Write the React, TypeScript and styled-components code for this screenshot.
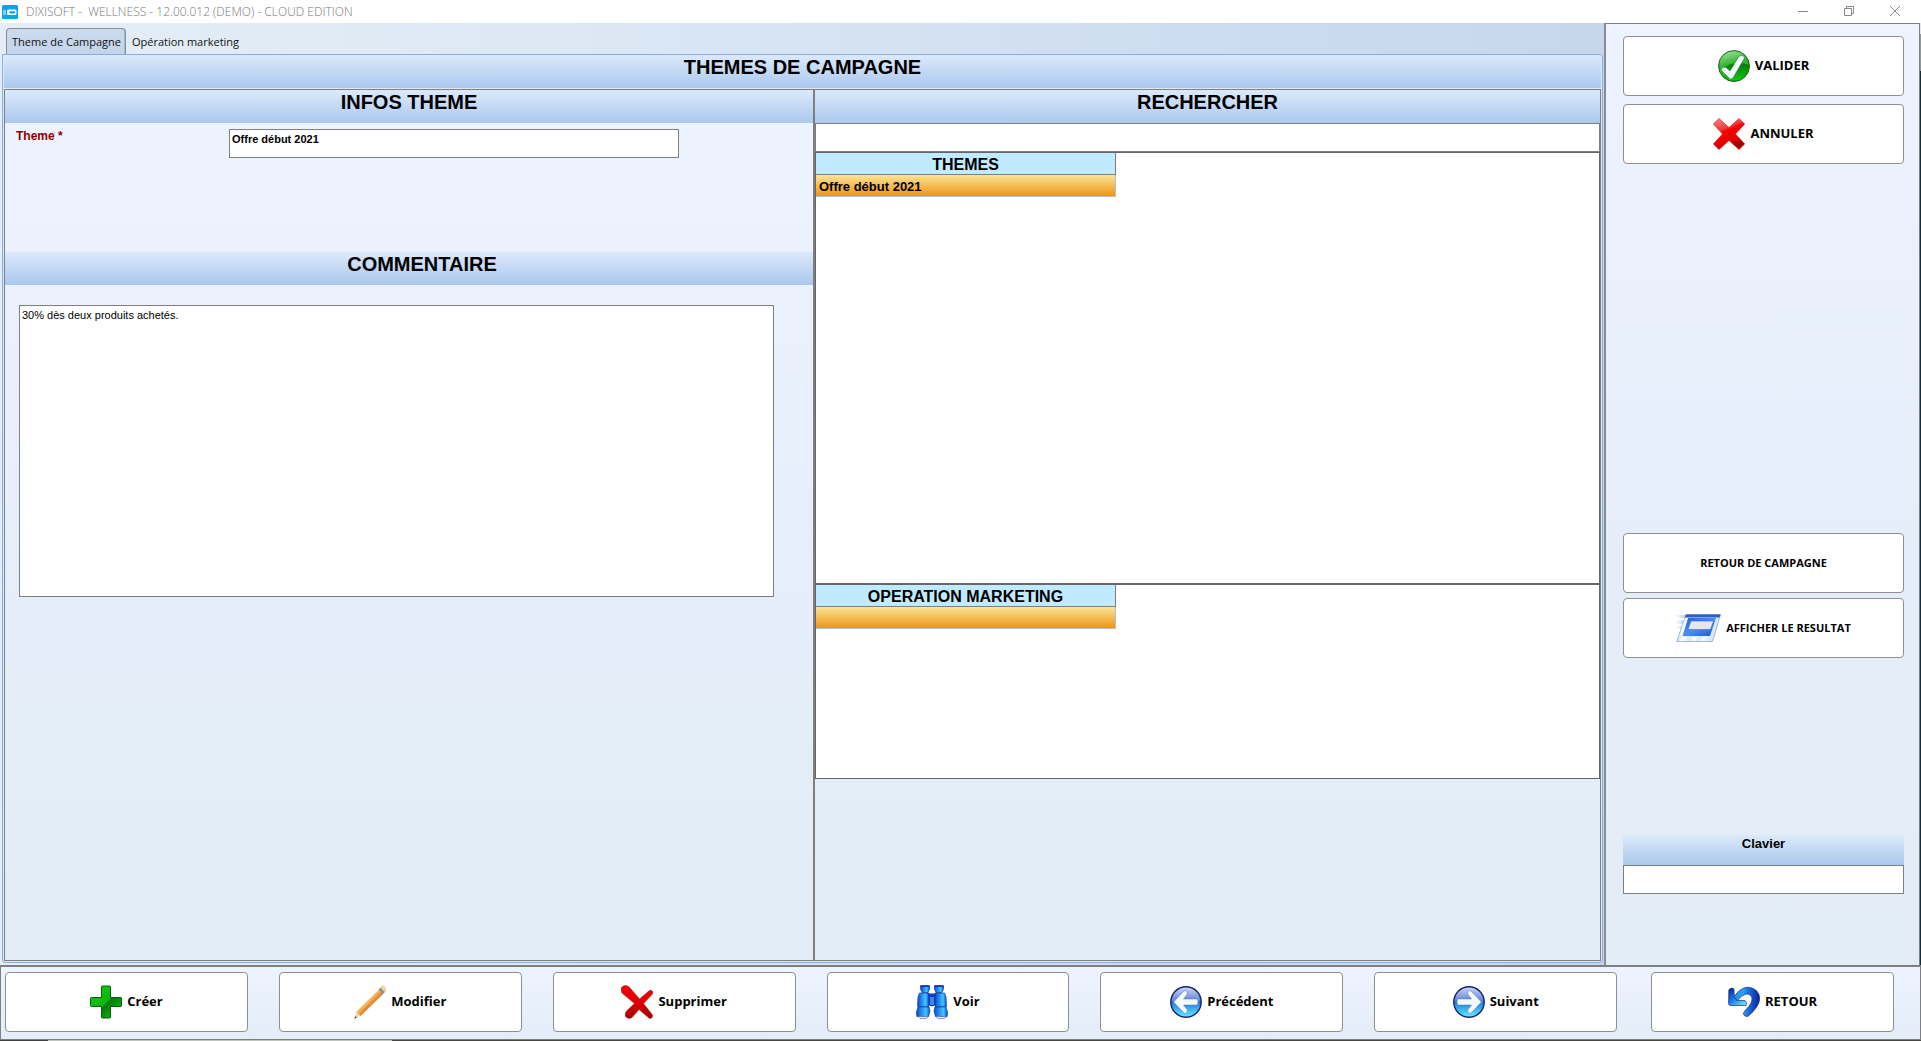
import React from "react";
import styled, { createGlobalStyle } from "styled-components";

const ARIAL = `"Liberation Sans", Arial, sans-serif`;
const SEGOE = `"Open Sans", "Segoe UI", sans-serif`;
const GREY = "#7f7f7f";

const GlobalStyle = createGlobalStyle`
  * { box-sizing: border-box; }
  body { margin: 0; background: #fff; color: #000; font-family: ${SEGOE}; }
  h1, h2, p { margin: 0; }
`;

const Page = styled.div`
  display: flex;
  flex-direction: column;
  min-height: 100vh;
`;

const TitleBar = styled.header`
  display: flex;
  align-items: center;
  height: 23px;
  padding: 0 3px 0 2px;
  background: #fff;
`;

const WindowTitle = styled.span`
  flex: 1;
  padding-left: 8px;
  font-size: 12px;
  font-weight: 300;
  line-height: 22px;
  white-space: pre;
  color: #777;
`;

const WindowButton = styled.button`
  display: grid;
  place-items: center;
  width: 46px;
  height: 22px;
  padding: 0 0 2px;
  border: 0;
  background: none;
  color: #888;
`;

const Workspace = styled.div`
  flex: 1;
  display: grid;
  grid-template-columns: minmax(0, 1fr) 316px;
  padding-right: 1px;
  background: linear-gradient(#e8e8e8 11px, #8d9a98 11px 48px, #0b3038 48px);
`;

const Main = styled.main`
  display: flex;
  flex-direction: column;
  padding: 5px 1px 2px 2px;
  background: linear-gradient(90deg, #e5eef8 0%, #dce8f4 35%, #cddcf0 75%, #c6d7ec 100%);
`;

const Tabs = styled.nav`
  display: flex;
  align-items: flex-end;
  padding-left: 4px;
`;

const Tab = styled.button<{ $active?: boolean }>`
  height: 26px;
  padding: 1px 4px 0 5px;
  border: 1px solid ${(p) => (p.$active ? "#8a8f96" : "transparent")};
  border-bottom: 0;
  border-radius: 4px 4px 0 0;
  background: ${(p) => (p.$active ? "linear-gradient(#ccdaec, #c3d5ec)" : "none")};
  box-shadow: ${(p) => (p.$active ? "inset -1px 0 #8fc3d6" : "none")};
  font: 11px/24px ${SEGOE};
  color: #111;
`;

const Pane = styled.section`
  flex: 1;
  display: flex;
  flex-direction: column;
  padding: 0 1px 1px;
  border: 1px solid #86aee2;
  border-radius: 0 3px 3px 3px;
  background: #dce9fb;
`;

const BarTitle = styled.h2<{ $indent?: number }>`
  height: 33px;
  padding-left: ${(p) => p.$indent ?? 0}px;
  background: linear-gradient(#dce9fc, #abc8ed);
  font: bold 20px/24px ${ARIAL};
  text-align: center;
`;

const Columns = styled.div`
  flex: 1;
  display: grid;
  grid-template-columns: minmax(0, 810fr) minmax(0, 787fr);
  margin-top: 1px;
`;

const Panel = styled.div`
  display: flex;
  flex-direction: column;
  border: 1px solid ${GREY};
  background: linear-gradient(#edf4ff, #e6edfa 65%, #e3eef7 72%, #e2ecf7);
`;

const ThemeForm = styled.div`
  display: grid;
  grid-template-columns: 213px minmax(0, 450px);
  align-items: start;
  height: 129px;
  padding: 6px 11px;
`;

const FieldLabel = styled.label`
  font: bold 12px/14px ${ARIAL};
  color: #8b0000;
`;

const TextInput = styled.input`
  width: 100%;
  height: 29px;
  padding: 0 2px 9px;
  border: 1px solid ${GREY};
  background: #fff;
  font: bold 11px/18px ${ARIAL};
  color: #000;
`;

const CommentWrap = styled.div`
  padding: 20px 39px 0 14px;
`;

const Comment = styled.textarea`
  display: block;
  width: 100%;
  height: 292px;
  padding: 2px;
  border: 1px solid ${GREY};
  background: #fff;
  font: 11px/14px ${ARIAL};
  color: #000;
  resize: none;
`;

const ListBox = styled.div<{ $grow: number }>`
  flex: ${(p) => p.$grow} 1 0;
  border: 1px solid #666;
  background: #fff;
`;

const ListSpacer = styled.div`
  flex: 182 1 0;
`;

const List = styled.table`
  width: 300px;
  border-collapse: separate;
  border-spacing: 0;
  font-family: ${ARIAL};

  th, td {
    height: 22px;
    padding: 0;
    line-height: 19px;
    border-right: 1px solid ${GREY};
    border-bottom: 1px solid ${GREY};
  }
  th {
    background: #c0eaff;
    font-size: 16px;
    padding-top: 2px;
  }
  td {
    padding: 1px 0 0 3px;
    background: linear-gradient(#fce596, #ee9416);
    border-color: #c0c0c0;
    font-size: 13px;
    font-weight: bold;
  }
`;

const SidePanel = styled.aside`
  display: flex;
  flex-direction: column;
  padding: 12px 15px 71px 17px;
  border: 1px solid ${GREY};
  border-left: 2px solid #8a8c90;
  border-bottom: 0;
  background: linear-gradient(#edf4ff, #e6edfa 60%, #e4edf8 80%, #e2ecf7);
`;

const SideGroup = styled.div<{ $gap: number }>`
  display: flex;
  flex-direction: column;
  gap: ${(p) => p.$gap}px;
`;

const SideGap = styled.div<{ $grow: number }>`
  flex: ${(p) => p.$grow} 1 0;
`;

const ActionButton = styled.button<{ $small?: boolean }>`
  display: flex;
  flex: 1 1 0;
  align-items: center;
  justify-content: center;
  gap: 5px;
  min-height: 60px;
  padding: 0;
  border: 1px solid #8f8f8f;
  border-radius: 4px;
  background: #fff;
  font: bold ${(p) => (p.$small ? 11 : 13)}px/18px ${SEGOE};
  color: #000;
  white-space: nowrap;

  svg { flex: none; }
  span { padding-bottom: ${(p) => (p.$small ? 0 : 2)}px; }
`;

const KeyboardLabel = styled.label`
  height: 30px;
  background: linear-gradient(#dce9fb, #abc8ec);
  font: bold 13px/18px ${ARIAL};
  text-align: center;
`;

const Footer = styled.footer`
  display: flex;
  gap: 31px;
  padding: 5px 26px 7px 4px;
  border: 1px solid ${GREY};
  border-top-width: 2px;
  background: linear-gradient(#eef4ff, #e3ecf8);

  button:last-child { margin-left: 3px; }
`;

const DesktopEdge = styled.div`
  height: 1px;
  background: linear-gradient(90deg, #403f39 48px, #c3c4b8 48px 392px, #4a463c 392px);
`;

const AppIcon = () => (
  <svg width="16" height="14" viewBox="0 0 16 14" aria-hidden="true">
    <rect width="16" height="14" rx="1.500" fill="#08a4ee" />
    <rect x="1" y="5" width="3" height="5" fill="#7fd0f7" />
    <rect x="5" y="4.500" width="9.500" height="5.500" rx="1.500" fill="#fff" />
    <rect x="7.500" y="6.200" width="5.500" height="2.200" rx=".6" fill="#08a4ee" />
  </svg>
);

const CheckIcon = () => (
  <svg width="32" height="32" viewBox="0 0 32 32" aria-hidden="true">
    <defs>
      <linearGradient id="ok" x1="0" y1="0" x2=".3" y2="1">
        <stop offset="0" stopColor="#b2ecb2" />
        <stop offset=".5" stopColor="#35b235" />
        <stop offset="1" stopColor="#12c412" />
      </linearGradient>
      <linearGradient id="od" x1="0" y1="0" x2="0" y2="1">
        <stop offset="0" stopColor="#0a760a" />
        <stop offset="1" stopColor="#10cc10" />
      </linearGradient>
    </defs>
    <circle cx="16" cy="16" r="15.400" fill="url(#ok)" />
    <path d="M7 17Q13 13 20 13 27 13 31.400 15A15.400 15.400 0 0 1 7 28.500z" fill="url(#od)" />
    <circle cx="16" cy="16" r="15.400" fill="none" stroke="#14641a" strokeWidth="1" />
    <path d="M3.500 18.500Q5 16.500 8 17.500L12 21 20.500 7Q22.500 4.500 25.500 6 27 7 26 9L15 28Q12.500 30.500 10.500 27.500L3.500 20.500z" fill="#f3fbff" stroke="#1b7d24" strokeWidth=".6" />
  </svg>
);

const CancelIcon = () => (
  <svg width="32" height="32" viewBox="0 0 32 32" aria-hidden="true">
    <defs>
      <linearGradient id="no" x1="0" y1="0" x2=".4" y2="1">
        <stop offset="0" stopColor="#f58a8a" />
        <stop offset=".4" stopColor="#ee3a3a" />
        <stop offset=".48" stopColor="#f80000" />
        <stop offset=".75" stopColor="#ee0000" />
        <stop offset="1" stopColor="#9e0000" />
      </linearGradient>
    </defs>
    <path d="M6 .5 16 9.500 26 .5 31.700 6 22.500 16 31.700 26 26 31.600 16 22.500 6 31.600 .3 26 9.500 16 .3 6z" fill="url(#no)" stroke="#d01818" strokeWidth=".6" strokeLinejoin="round" />
  </svg>
);

const WindowIcon = () => (
  <svg width="45" height="28" viewBox="0 0 45 28" aria-hidden="true">
    <defs>
      <linearGradient id="wn" x1="0" y1="0" x2="1" y2="1">
        <stop offset="0" stopColor="#1c5ee0" />
        <stop offset=".5" stopColor="#4a90f2" />
        <stop offset="1" stopColor="#1a56d6" />
      </linearGradient>
      <linearGradient id="wf" x1="0" y1="0" x2="1" y2="0">
        <stop offset="0" stopColor="#9fc6fa" stopOpacity="0" />
        <stop offset="1" stopColor="#9cc0f5" />
      </linearGradient>
    </defs>
    <path d="M0 1h12l-1 3H0zM0 6h10l-1 4H0zM0 12h8l-1 3H0z" fill="url(#wf)" />
    <path d="M10 .5H44.500L36.500 27.500H.8z" fill="#dcebfc" stroke="#8fa8cc" strokeWidth=".8" />
    <path d="M10 .5H44.500L43.500 3.500H9z" fill="#2a5fc8" />
    <path d="M12 4 6 22H34L40 4z" fill="url(#wn)" />
    <path d="M9 4 3.500 22H6.500L12 4z" fill="#f6faff" />
    <path d="M15 7H37.500L34.500 15.500H12z" fill="#e6e7eb" stroke="#2a56b0" strokeWidth=".5" />
    <path d="M5 23h6l-1 4H4zM16 23h5l-1 4h-5zM26 23h5l-1 4h-5z" fill="#fff" opacity=".7" />
  </svg>
);

const PlusIcon = () => (
  <svg width="32" height="34" viewBox="0 0 32 34" aria-hidden="true">
    <defs>
      <linearGradient id="pl" x1="0" y1="0" x2="1" y2="1">
        <stop offset="0" stopColor="#0bd30b" />
        <stop offset=".5" stopColor="#10b510" />
        <stop offset=".54" stopColor="#087a08" />
        <stop offset="1" stopColor="#0cd00c" />
      </linearGradient>
    </defs>
    <path d="M12.500 1h7q1 0 1 1v10.500H31q.5 0 .5 1v7q0 1-.5 1H20.500V32q0 1-1 1h-7q-1 0-1-1V21.500H1.500q-1 0-1-1v-7q0-1 1-1h10V2q0-1 1-1z" fill="url(#pl)" stroke="#0a5c10" strokeWidth="1" />
  </svg>
);

const PencilIcon = () => (
  <svg width="32" height="34" viewBox="0 0 32 34" aria-hidden="true">
    <path d="M2.500 27 25 4.500 29.500 8.500 6.500 31z" fill="#f6ad50" />
    <path d="M5 28.500 27.500 6.500 29.500 8.500 6.500 31z" fill="#dc8d3d" />
    <path d="M2.500 27 26 4" stroke="#f9cb86" strokeWidth="1" />
    <path d="M2.500 27 6.500 31 .5 33.500z" fill="#f3d6a3" />
    <path d="M1.300 31.200 3 32.500 .3 33.700z" fill="#3b3b3b" />
    <path d="M24.500 4.500 26.500 2.500 31 7 29 9z" fill="#8792a8" />
    <path d="M26.500 2.500 28 1Q31 .5 31.700 5L31 7z" fill="#f2dc9a" stroke="#c9ae70" strokeWidth=".5" />
  </svg>
);

const DeleteIcon = () => (
  <svg width="32" height="34" viewBox="0 0 32 34" aria-hidden="true">
    <defs>
      <linearGradient id="de" x1="0" y1="0" x2="0" y2="1">
        <stop offset="0" stopColor="#f50505" />
        <stop offset=".5" stopColor="#dd0303" />
        <stop offset="1" stopColor="#a30404" />
      </linearGradient>
    </defs>
    <path d="M1 2Q4-.8 8 1.800L18.500 14 28.500 5.500Q31 4.500 31.800 7L31.500 9 22.500 18.500 31.500 30Q32 33.500 28.500 33.500L18 24.500 11 32.500Q7.500 35 4.500 31.500 3.500 28 6 25.500L13.500 18.500 1 8Q-.8 4.500 1 2z" fill="url(#de)" stroke="#9b1010" strokeWidth=".5" />
  </svg>
);

const BinocularsIcon = () => (
  <svg width="32" height="34" viewBox="0 0 32 34" aria-hidden="true">
    <defs>
      <linearGradient id="bi" x1="0" y1="0" x2="1" y2="0">
        <stop offset="0" stopColor="#0a49c4" />
        <stop offset=".35" stopColor="#1f8af0" />
        <stop offset=".7" stopColor="#45c4ff" />
        <stop offset="1" stopColor="#0a50cc" />
      </linearGradient>
    </defs>
    <g fill="url(#bi)" stroke="#0b39a8" strokeWidth=".7">
      <path d="M4.500 1h9v3l-1.500 3.500H6L4.500 4z" />
      <path d="M18.500 1h9v3L26 7.500h-6L18.500 4z" />
      <path d="M3.500 8h9.500v13.500H1.500L2 12z" />
      <path d="M19 8h9.500L30 12l.5 9.500H19z" />
      <path d="M2 22h11l1 4-1.500 5.500H.8L.5 27z" />
      <path d="M19 22h11l1.500 5-.3 4.500H19.500L18 26z" />
    </g>
    <path d="M12.500 8.500H19.500V20Q16 22.500 12.500 20z" fill="#0d3fbb" />
    <path d="M14 12h4v8h-4z" fill="#2f8aee" />
    <path d="M4.500 1h9M18.500 1h9" stroke="#082a9c" strokeWidth="1.500" />
    <path d="M2 31.500h10.500l-2 2H4zM19.500 31.500H31l-3 2h-6z" fill="#eaf3ff" stroke="#3b62c4" strokeWidth=".6" />
  </svg>
);

const ArrowIcon = ({ right }: { right?: boolean }) => (
  <svg width="32" height="34" viewBox="0 0 32 34" aria-hidden="true">
    <defs>
      <linearGradient id="ar" x1="0" y1="0" x2="0" y2="1">
        <stop offset="0" stopColor="#cfd6f3" />
        <stop offset=".46" stopColor="#5e86d6" />
        <stop offset=".5" stopColor="#2379dc" />
        <stop offset="1" stopColor="#5ff0ff" />
      </linearGradient>
    </defs>
    <circle cx="16" cy="17" r="15.200" fill="url(#ar)" stroke="#14246e" strokeWidth="1.400" />
    <path
      transform={right ? "translate(32 0) scale(-1 1)" : undefined}
      d="M3.500 17 14 6Q15.500 5 17 6.500 17.500 8 17 9.500L13.500 14H26.500Q28 14 28 17T26.500 20H13.500L17 24.500Q17.500 26 17 27.500 15.500 29 14 28z"
      fill="#f4fbff"
      stroke="#4a74cc"
      strokeWidth=".5"
      strokeLinejoin="round"
    />
  </svg>
);

const ReturnIcon = () => (
  <svg width="32" height="32" viewBox="0 0 32 32" aria-hidden="true">
    <defs>
      <linearGradient id="re" x1="0" y1="0" x2="1" y2="0">
        <stop offset="0" stopColor="#1f8df0" />
        <stop offset=".35" stopColor="#2f9ff5" />
        <stop offset=".6" stopColor="#1768dc" />
        <stop offset="1" stopColor="#0a1f94" />
      </linearGradient>
      <linearGradient id="rb" x1="0" y1="0" x2=".9" y2="1">
        <stop offset="0" stopColor="#0a1f94" />
        <stop offset=".5" stopColor="#1a7ce8" />
        <stop offset="1" stopColor="#7ae8ff" />
      </linearGradient>
    </defs>
    <path d="M6 11Q12 1 21 1.200 31.500 3 31.700 13 31 21 20.500 30Q17 31.500 15.500 28.500 15 26.500 17.500 24 24.500 17.500 24 12 22.500 7.500 18 8 13 9.500 9 15z" fill="url(#re)" stroke="#12307e" strokeWidth=".7" />
    <path d="M.8 4Q3 .5 6 3L6.300 11 9 14.500H17Q19.500 16.500 18 19.500H2.500Q.6 19.500 .6 17.500z" fill="url(#rb)" stroke="#12307e" strokeWidth=".7" />
  </svg>
);

const footerActions = [
  { label: "Créer", icon: <PlusIcon /> },
  { label: "Modifier", icon: <PencilIcon /> },
  { label: "Supprimer", icon: <DeleteIcon /> },
  { label: "Voir", icon: <BinocularsIcon /> },
  { label: "Précédent", icon: <ArrowIcon /> },
  { label: "Suivant", icon: <ArrowIcon right /> },
  { label: "RETOUR", icon: <ReturnIcon /> },
];

const RecordList = ({ title, rows }: { title: string; rows: string[] }) => (
  <List>
    <thead>
      <tr>
        <th scope="col">{title}</th>
      </tr>
    </thead>
    <tbody>
      {rows.map((row, i) => (
        <tr key={i}>
          <td>{row}</td>
        </tr>
      ))}
    </tbody>
  </List>
);

export default function App() {
  return (
    <Page>
      <GlobalStyle />
      <TitleBar>
        <AppIcon />
        <WindowTitle>{"DIXISOFT -  WELLNESS - 12.00.012 (DEMO) - CLOUD EDITION"}</WindowTitle>
        <WindowButton aria-label="Réduire">
          <svg width="10" height="10" viewBox="0 0 10 10" stroke="currentColor"><path d="M0 5.500h10" /></svg>
        </WindowButton>
        <WindowButton aria-label="Restaurer">
          <svg width="10" height="10" viewBox="0 0 10 10" fill="none" stroke="currentColor">
            <path d="M.5 2.500h7v7h-7zM2.500 2.500v-2h7v7h-2" />
          </svg>
        </WindowButton>
        <WindowButton aria-label="Fermer">
          <svg width="10" height="10" viewBox="0 0 10 10" stroke="currentColor"><path d="M0 0l10 10M10 0 0 10" /></svg>
        </WindowButton>
      </TitleBar>

      <Workspace>
        <Main>
          <Tabs>
            <Tab $active>Theme de Campagne</Tab>
            <Tab>Opération marketing</Tab>
          </Tabs>
          <Pane>
            <BarTitle as="h1">THEMES DE CAMPAGNE</BarTitle>
            <Columns>
              <Panel>
                <BarTitle>INFOS THEME</BarTitle>
                <ThemeForm>
                  <FieldLabel htmlFor="theme">Theme *</FieldLabel>
                  <TextInput id="theme" defaultValue="Offre début 2021" />
                </ThemeForm>
                <BarTitle id="comment-title" $indent={26}>COMMENTAIRE</BarTitle>
                <CommentWrap>
                  <Comment aria-labelledby="comment-title" defaultValue="30% dès deux produits achetés." />
                </CommentWrap>
              </Panel>
              <Panel>
                <BarTitle id="search-title">RECHERCHER</BarTitle>
                <TextInput aria-labelledby="search-title" />
                <ListBox $grow={432}>
                  <RecordList title="THEMES" rows={["Offre début 2021"]} />
                </ListBox>
                <ListBox $grow={194}>
                  <RecordList title="OPERATION MARKETING" rows={[""]} />
                </ListBox>
                <ListSpacer />
              </Panel>
            </Columns>
          </Pane>
        </Main>

        <SidePanel>
          <SideGroup $gap={8}>
            <ActionButton><CheckIcon /><span>VALIDER</span></ActionButton>
            <ActionButton><CancelIcon /><span>ANNULER</span></ActionButton>
          </SideGroup>
          <SideGap $grow={369} />
          <SideGroup $gap={5}>
            <ActionButton $small><span>RETOUR DE CAMPAGNE</span></ActionButton>
            <ActionButton $small><WindowIcon /><span>AFFICHER LE RESULTAT</span></ActionButton>
          </SideGroup>
          <SideGap $grow={177} />
          <SideGroup $gap={0}>
            <KeyboardLabel htmlFor="keyboard">Clavier</KeyboardLabel>
            <TextInput id="keyboard" />
          </SideGroup>
        </SidePanel>
      </Workspace>

      <Footer>
        {footerActions.map((a) => (
          <ActionButton key={a.label}>{a.icon}<span>{a.label}</span></ActionButton>
        ))}
      </Footer>
      <DesktopEdge />
    </Page>
  );
}
